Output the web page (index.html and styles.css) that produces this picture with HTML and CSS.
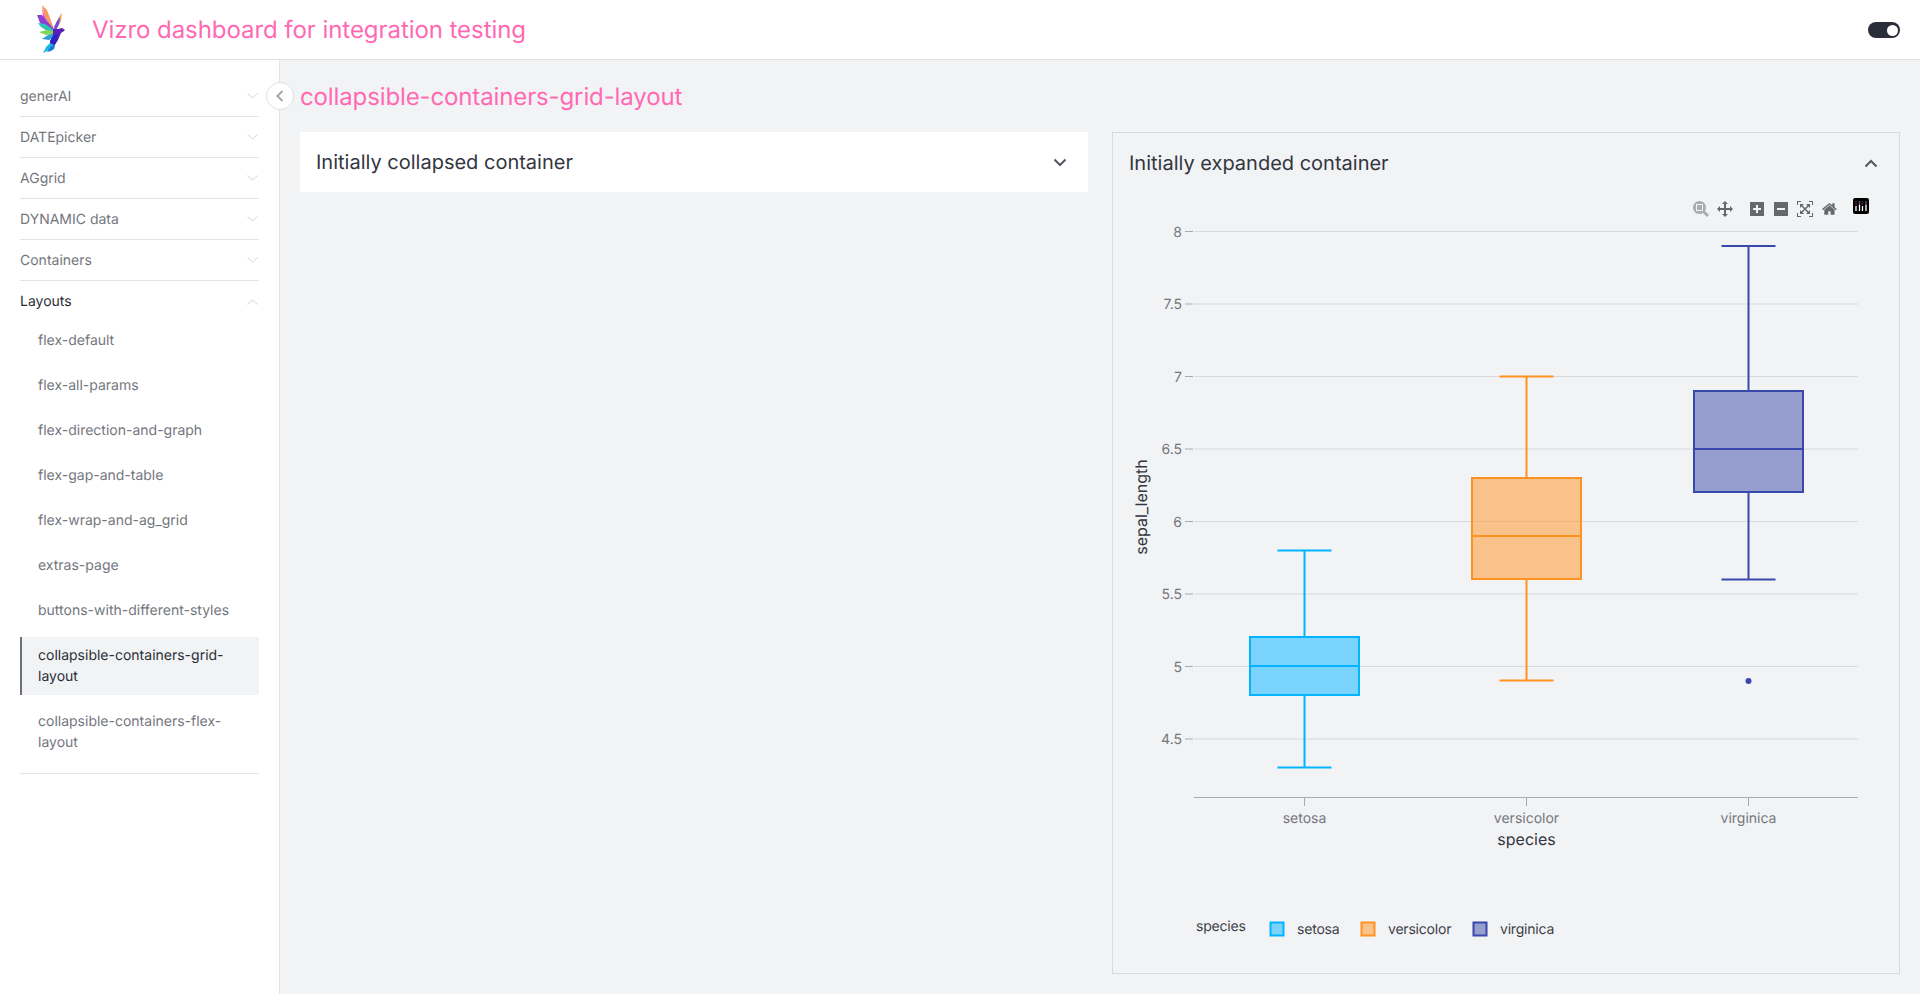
FILE: index.html
```html
<!DOCTYPE html>
<html>
  <head>
    <title>Vizro dashboard for integration testing</title>
    <link rel="stylesheet" href="styles.css">
  </head>
  <body>
    <header class="top-bar">
      <div class="logo">
        <svg width="60" height="59" viewBox="0 0 60 59">
          <polygon points="22,5 27,10 30,18 34,29 28,23 24,14" fill="#f79a62"/>
          <polygon points="22,7 24,14 28,23 34,29 27,25 23,17" fill="#ee5cae"/>
          <polygon points="17,15 22,15 27,21 34,29 35,31 26,28 20,23" fill="#8f3fd6"/>
          <polygon points="18,23 25,24 31,28 35,31 27,31 21,27" fill="#2fc4b4"/>
          <polygon points="19,32 27,30 34,31 35,34 26,35" fill="#7fd65a"/>
          <polygon points="22,39 28,35 35,33 36,36 29,40" fill="#2f9fd8"/>
          <polygon points="42,13 41,21 38,27 35,32 36,23 39,17" fill="#f2a06e"/>
          <polygon points="40,17 39,24 35,32 34,27 37,21" fill="#6a4fd8"/>
          <polygon points="33,29 38,29 42,28 45,30 44,31 41,33 38,40 34,46 30,47 30,41 33,36" fill="#5a1fb5"/>
          <polygon points="33,36 38,33 37,41 34,46 30,47 30,41" fill="#2b23c4"/>
          <polygon points="23,53 26,47 30,43 34,45 29,50" fill="#1fb6e2"/>
          <polygon points="27,52 31,46 35,46 34,49 31,51" fill="#1a7ad6"/>
        </svg>
      </div>
      <h1 class="dash-title">Vizro dashboard for integration testing</h1>
      <div class="theme-toggle"><span class="knob"></span></div>
    </header>

    <div class="page">
      <nav class="sidebar">
        <div class="nav-group">
          <span>generAI</span>
          <svg class="chev" width="11" height="6" viewBox="0 0 11 6"><path d="M0.5 0.5 L5.5 5 L10.5 0.5"/></svg>
        </div>
        <div class="nav-group">
          <span>DATEpicker</span>
          <svg class="chev" width="11" height="6" viewBox="0 0 11 6"><path d="M0.5 0.5 L5.5 5 L10.5 0.5"/></svg>
        </div>
        <div class="nav-group">
          <span>AGgrid</span>
          <svg class="chev" width="11" height="6" viewBox="0 0 11 6"><path d="M0.5 0.5 L5.5 5 L10.5 0.5"/></svg>
        </div>
        <div class="nav-group">
          <span>DYNAMIC data</span>
          <svg class="chev" width="11" height="6" viewBox="0 0 11 6"><path d="M0.5 0.5 L5.5 5 L10.5 0.5"/></svg>
        </div>
        <div class="nav-group">
          <span>Containers</span>
          <svg class="chev" width="11" height="6" viewBox="0 0 11 6"><path d="M0.5 0.5 L5.5 5 L10.5 0.5"/></svg>
        </div>
        <div class="nav-group open">
          <span>Layouts</span>
          <svg class="chev" width="11" height="6" viewBox="0 0 11 6"><path d="M0.5 5.5 L5.5 1 L10.5 5.5"/></svg>
        </div>
        <div class="nav-links">
          <a class="nav-link">flex-default</a>
          <a class="nav-link">flex-all-params</a>
          <a class="nav-link">flex-direction-and-graph</a>
          <a class="nav-link">flex-gap-and-table</a>
          <a class="nav-link">flex-wrap-and-ag_grid</a>
          <a class="nav-link">extras-page</a>
          <a class="nav-link">buttons-with-different-styles</a>
          <a class="nav-link active">collapsible-containers-grid-layout</a>
          <a class="nav-link">collapsible-containers-flex-layout</a>
        </div>
      </nav>

      <main class="content">
        <div class="collapse-btn">
          <svg width="10" height="14" viewBox="0 0 10 14"><path d="M7.5 2 L2.5 7 L7.5 12"/></svg>
        </div>
        <h2 class="page-title">collapsible-containers-grid-layout</h2>
        <div class="grid">
          <section class="card collapsed">
            <div class="card-head">
              <span>Initially collapsed container</span>
              <svg class="card-chev" width="14" height="9" viewBox="0 0 14 9"><path d="M1.5 1.5 L7 7 L12.5 1.5"/></svg>
            </div>
          </section>
          <section class="card expanded">
            <div class="card-head">
              <span>Initially expanded container</span>
              <svg class="card-chev" width="14" height="9" viewBox="0 0 14 9"><path d="M1.5 7.5 L7 2 L12.5 7.5"/></svg>
            </div>
            <!-- viewBox uses page coordinates so the plot numbers are easy to check -->
            <svg class="chart" width="786" height="780" viewBox="1113 193 786 780">
              <g class="grid-lines">
                <path d="M1194 231.5H1858M1194 304H1858M1194 376.5H1858M1194 449H1858M1194 521.5H1858M1194 594H1858M1194 666.5H1858M1194 739H1858"/>
              </g>
              <g class="ticks">
                <path d="M1185 231.5H1193M1185 304H1193M1185 376.5H1193M1185 449H1193M1185 521.5H1193M1185 594H1193M1185 666.5H1193M1185 739H1193"/>
                <path d="M1304.5 798V806M1526.5 798V806M1748.5 798V806"/>
              </g>
              <path class="axis-line" d="M1194 797.5H1858"/>

              <g class="tick-text y-labels">
                <text x="1182" y="236.5">8</text>
                <text x="1182" y="309">7.5</text>
                <text x="1182" y="381.5">7</text>
                <text x="1182" y="454">6.5</text>
                <text x="1182" y="526.5">6</text>
                <text x="1182" y="599">5.5</text>
                <text x="1182" y="671.5">5</text>
                <text x="1182" y="744">4.5</text>
              </g>
              <g class="tick-text x-labels">
                <text x="1304.5" y="823">setosa</text>
                <text x="1526.5" y="823">versicolor</text>
                <text x="1748.5" y="823">virginica</text>
              </g>
              <text class="axis-title" x="1526.5" y="845" text-anchor="middle">species</text>
              <text class="axis-title" transform="translate(1147 507) rotate(-90)" text-anchor="middle">sepal_length</text>

              <g class="box setosa">
                <rect x="1250" y="637" width="109" height="58"/>
                <path d="M1250 666H1359M1304.5 637V550M1304.5 695V767.5M1277.5 550.5H1331.5M1277.5 767.5H1331.5"/>
              </g>
              <g class="box versicolor">
                <rect x="1472" y="478" width="109" height="101"/>
                <path d="M1472 536H1581M1526.5 478V376.5M1526.5 579V680.5M1499.5 376.5H1553.5M1499.5 680.5H1553.5"/>
              </g>
              <g class="box virginica">
                <rect x="1694" y="391" width="109" height="101"/>
                <path d="M1694 449H1803M1748.5 391V246M1748.5 492V579.5M1721.5 246H1775.5M1721.5 579.5H1775.5"/>
              </g>
              <circle cx="1748.5" cy="681" r="3" fill="#3949ab"/>

              <text class="legend-text" x="1196" y="931">species</text>
              <rect class="swatch setosa-sw" x="1270.5" y="922.5" width="13" height="13"/>
              <text class="legend-text" x="1297" y="934">setosa</text>
              <rect class="swatch versicolor-sw" x="1361.5" y="922.5" width="13" height="13"/>
              <text class="legend-text" x="1388" y="934">versicolor</text>
              <rect class="swatch virginica-sw" x="1473.5" y="922.5" width="13" height="13"/>
              <text class="legend-text" x="1500" y="934">virginica</text>

              <g class="modebar">
                <g transform="translate(1693 201) scale(0.016)" opacity="0.5"><path transform="matrix(1 0 0 -1 0 850)" d="m1000-25l-250 251c40 63 63 138 63 218 0 224-182 406-407 406-224 0-406-182-406-406s183-406 407-406c80 0 155 22 218 62l250-250 125 125z m-812 250l0 438 437 0 0-438-437 0z m62 375l313 0 0-312-313 0 0 312z"/></g>
                <g transform="translate(1717 201) scale(0.016)"><path transform="matrix(1 0 0 -1 0 850)" d="m1000 350l-187 188 0-125-250 0 0 250 125 0-188 187-187-187 125 0 0-250-250 0 0 125-188-188 186-187 0 125 252 0 0-250-125 0 187-188 188 188-125 0 0 250 250 0 0-126 187 188z"/></g>
                <g transform="translate(1750 202) scale(0.016)"><path transform="matrix(1 0 0 -1 0 788)" d="m1 787l0-875 875 0 0 875-875 0z m687-500l-187 0 0-187-125 0 0 187-188 0 0 125 188 0 0 187 125 0 0-187 187 0 0-125z"/></g>
                <g transform="translate(1774 202) scale(0.016)"><path transform="matrix(1 0 0 -1 0 788)" d="m0 788l0-876 875 0 0 876-875 0z m688-500l-500 0 0 125 500 0 0-125z"/></g>
                <g transform="translate(1797 201) scale(0.016)"><path transform="matrix(1 0 0 -1 0 850)" d="m250 850l-187 0-63 0 0-62 0-188 63 0 0 188 187 0 0 62z m688 0l-188 0 0-62 188 0 0-188 62 0 0 188 0 62-62 0z m-875-938l0 188-63 0 0-188 0-62 63 0 187 0 0 62-187 0z m875 188l0-188-188 0 0-62 188 0 62 0 0 62 0 188-62 0z m-125 188l-1 0-93-94-156 156 156 156 92-93 2 0 0 250-250 0 0-2 93-92-156-156-156 156 94 92 0 2-250 0 0-250 0 0 93 93 157-156-157-156-93 94 0 0 0-250 250 0 0 0-94 93 156 157 156-157-93-93 0 0 250 0 0 250z"/></g>
                <g transform="translate(1822 201) scale(0.016)"><path transform="matrix(1 0 0 -1 0 850)" d="m786 296v-267q0-15-11-26t-25-10h-214v214h-143v-214h-214q-15 0-25 10t-11 26v267q0 1 0 2t0 2l321 264 321-264q1-1 1-4z m124 39l-34-41q-5-5-12-6h-2q-7 0-12 3l-386 322-386-322q-7-4-13-4-7 2-12 7l-35 41q-4 5-3 13t6 12l401 334q18 15 42 15t43-15l136-114v109q0 8 5 13t13 5h107q8 0 13-5t5-13v-227l122-102q5-5 6-12t-4-13z"/></g>
              </g>
              <g class="plotly-logo">
                <rect x="1853" y="198" width="16" height="16" rx="2" fill="#000"/>
                <path d="M1856 206V211M1859.5 204.5V211M1862.5 206V211M1866 204.5V211" stroke="#fff" stroke-width="1.3"/>
                <path d="M1856 201.5V205M1862.5 201.5V205" stroke="#e8175d" stroke-width="1.3" stroke-dasharray="1 1"/>
                <path d="M1859.5 201.5V204M1866 201.5V204" stroke="#7fd6e8" stroke-width="1.3" stroke-dasharray="1 1"/>
              </g>
            </svg>
          </section>
        </div>
      </main>
    </div>
  </body>
</html>
```
FILE: styles.css
```css
* {
  box-sizing: border-box;
}
body {
  margin: 0;
  height: 100vh;
  display: flex;
  flex-direction: column;
  overflow: hidden;
  font-family: 'Inter', sans-serif;
  text-rendering: geometricPrecision;
  color: #2a2e38;
  background-color: #f2f3f5;
}
.top-bar {
  height: 60px;
  flex: none;
  display: flex;
  align-items: center;
  padding-left: 20px;
  padding-right: 20px;
  background-color: #fff;
  border-bottom: 1px solid #dfe0e3;
}
.logo {
  width: 60px;
  height: 59px;
  margin-right: 12px;
}
.logo svg {
  display: block;
}
.dash-title {
  margin: 0;
  font-size: 24px;
  font-weight: 400;
  letter-spacing: -0.06px;
  color: #ff69b4;
}
.theme-toggle {
  width: 32px;
  height: 16px;
  margin-left: auto;
  padding: 3px 2px 2px;
  display: flex;
  justify-content: flex-end;
  border-radius: 8px;
  background-color: #2a2e38;
}
.knob {
  width: 11px;
  height: 11px;
  border-radius: 50%;
  background-color: #fff;
}
.page {
  flex: 1;
  display: flex;
  min-height: 0;
}
.sidebar {
  width: 280px;
  flex: none;
  padding: 16px 20px 0;
  background-color: #fff;
  border-right: 1px solid #e3e4e7;
  font-size: 14px;
  line-height: 21px;
}
.nav-group {
  height: 41px;
  display: flex;
  align-items: center;
  justify-content: space-between;
  color: #74767d;
  border-bottom: 1px solid #e3e4e7;
}
.nav-group.open {
  color: #2a2e38;
  border-bottom: none;
}
.chev {
  margin-right: 1px;
  fill: none;
  stroke: #d3d4d7;
  stroke-width: 1;
}
.nav-links {
  display: flex;
  flex-direction: column;
  gap: 8px;
  padding-bottom: 12px;
  border-bottom: 1px solid #e3e4e7;
}
.nav-link {
  padding: 8px 18px;
  color: #74767d;
}
.nav-link.active {
  color: #2a2e38;
  background-color: #f2f3f5;
  border-left: 2px solid #6f7178;
  padding-left: 16px;
}
.content {
  flex: 1;
  min-width: 0;
  position: relative;
  padding: 0 20px 20px;
  display: flex;
  flex-direction: column;
}
.collapse-btn {
  position: absolute;
  left: -14px;
  top: 22px;
  width: 28px;
  height: 28px;
  display: flex;
  align-items: center;
  justify-content: center;
  border-radius: 50%;
  background-color: #fff;
  border: 1px solid #dfe0e3;
}
.collapse-btn svg {
  fill: none;
  stroke: #a3a5aa;
  stroke-width: 2;
}
.page-title {
  height: 72px;
  margin: 0;
  display: flex;
  align-items: center;
  font-size: 24px;
  font-weight: 400;
  letter-spacing: -0.125px;
  color: #ff69b4;
}
.grid {
  flex: 1;
  min-height: 0;
  display: grid;
  grid-template-columns: 1fr 1fr;
  gap: 24px;
  align-items: start;
}
.card-head {
  height: 60px;
  display: flex;
  align-items: center;
  justify-content: space-between;
  font-size: 20px;
  color: #33363f;
}
.card-chev {
  fill: none;
  stroke: #54575f;
  stroke-width: 2;
}
.collapsed {
  background-color: #fff;
}
.collapsed .card-head {
  padding: 0 21px 0 16px;
}
.expanded {
  height: 100%;
  border: 1px solid #d9dadd;
}
.expanded .card-head {
  padding: 0 21px 0 16px;
}
.chart {
  display: block;
  font-family: 'Inter', sans-serif;
}
.grid-lines path {
  fill: none;
  stroke: #d8d9dc;
  stroke-width: 1;
}
.ticks path {
  fill: none;
  stroke: #a9abb0;
  stroke-width: 1;
}
.axis-line {
  fill: none;
  stroke: #a9abb0;
  stroke-width: 1;
}
.tick-text {
  font-size: 14px;
  fill: #75777e;
}
.y-labels {
  text-anchor: end;
}
.x-labels {
  text-anchor: middle;
}
.axis-title {
  font-size: 16px;
  fill: #33363f;
}
.legend-text {
  font-size: 14px;
  letter-spacing: -0.2px;
  fill: #3c3f49;
}
.box rect,
.box path {
  stroke-width: 2;
}
.box path {
  fill: none;
}
.setosa rect {
  fill: rgba(0, 180, 255, 0.5);
  stroke: #00b4ff;
}
.setosa path {
  stroke: #00b4ff;
}
.versicolor rect {
  fill: rgba(255, 146, 34, 0.5);
  stroke: #ff9222;
}
.versicolor path {
  stroke: #ff9222;
}
.virginica rect {
  fill: rgba(57, 73, 171, 0.5);
  stroke: #3949ab;
}
.virginica path {
  stroke: #3949ab;
}
.swatch {
  stroke-width: 2;
}
.setosa-sw {
  fill: rgba(0, 180, 255, 0.5);
  stroke: #00b4ff;
}
.versicolor-sw {
  fill: rgba(255, 146, 34, 0.5);
  stroke: #ff9222;
}
.virginica-sw {
  fill: rgba(57, 73, 171, 0.5);
  stroke: #3949ab;
}
.modebar path {
  fill: #66686e;
}
```
